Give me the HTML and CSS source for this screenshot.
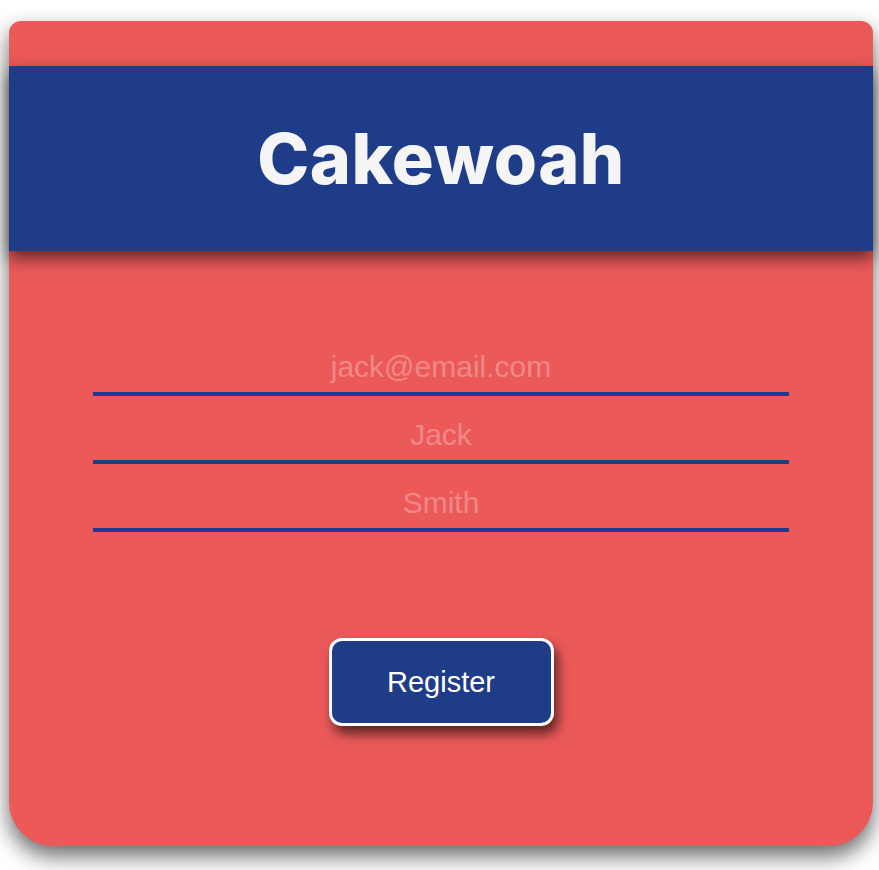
FILE: index.html
```html
<!DOCTYPE html>
<html lang="en">
<head>
<meta charset="utf-8">
<title>Cakewoah</title>
<link rel="stylesheet" href="styles.css">
</head>
<body>
<main class="card">
  <header class="brand">
    <h1 class="brand-title">Cakewoah</h1>
  </header>
  <form class="form">
    <div class="fields">
      <input class="field" type="email" placeholder="jack@email.com">
      <input class="field" type="text" placeholder="Jack">
      <input class="field" type="text" placeholder="Smith">
    </div>
    <button class="register" type="button">Register</button>
  </form>
</main>
</body>
</html>
```

FILE: styles.css
```css
html, body {
  margin: 0;
  background: #ffffff;
}
body {
  padding: 21px 6px 24px 9px;
  font-family: "Liberation Sans", Arial, sans-serif;
}
.card {
  width: 864px;
  height: 825px;
  box-sizing: border-box;
  background: #ec5959;
  border-radius: 12px 12px 44px 44px;
  box-shadow: 0 10px 22px rgba(0, 0, 0, 0.6);
  padding-top: 45px;
  display: flex;
  flex-direction: column;
  align-items: center;
}
.brand {
  align-self: stretch;
  height: 185px;
  background: #1f3c88;
  display: flex;
  align-items: center;
  justify-content: center;
  box-shadow: 0 7px 16px rgba(0, 0, 0, 0.6);
}
.brand-title {
  margin: 0;
  font-family: Inter, "DejaVu Sans", sans-serif;
  font-weight: 800;
  font-size: 70px;
  line-height: 1;
  color: #f5f5f5;
  letter-spacing: 0.5px;
}
.form {
  margin-top: 77px;
  display: flex;
  flex-direction: column;
  align-items: center;
  gap: 106px;
}
.fields {
  display: flex;
  flex-direction: column;
  width: 696px;
}
.field {
  box-sizing: border-box;
  width: 100%;
  height: 68px;
  padding: 22px 0 8px;
  margin: 0;
  border: none;
  border-bottom: 4px solid #1f3c88;
  background: transparent;
  font-family: "Liberation Sans", Arial, sans-serif;
  font-size: 30px;
  line-height: 34px;
  text-align: center;
  color: #ffffff;
  outline: none;
}
.field::placeholder {
  color: rgba(255, 255, 255, 0.3);
}
.register {
  width: 225px;
  height: 88px;
  box-sizing: border-box;
  border: 3px solid #ffffff;
  border-radius: 13px;
  background: #1f3c88;
  color: #ffffff;
  font-family: "Liberation Sans", Arial, sans-serif;
  font-size: 29px;
  box-shadow: 4px 8px 12px rgba(0, 0, 0, 0.6);
  cursor: pointer;
}
```
